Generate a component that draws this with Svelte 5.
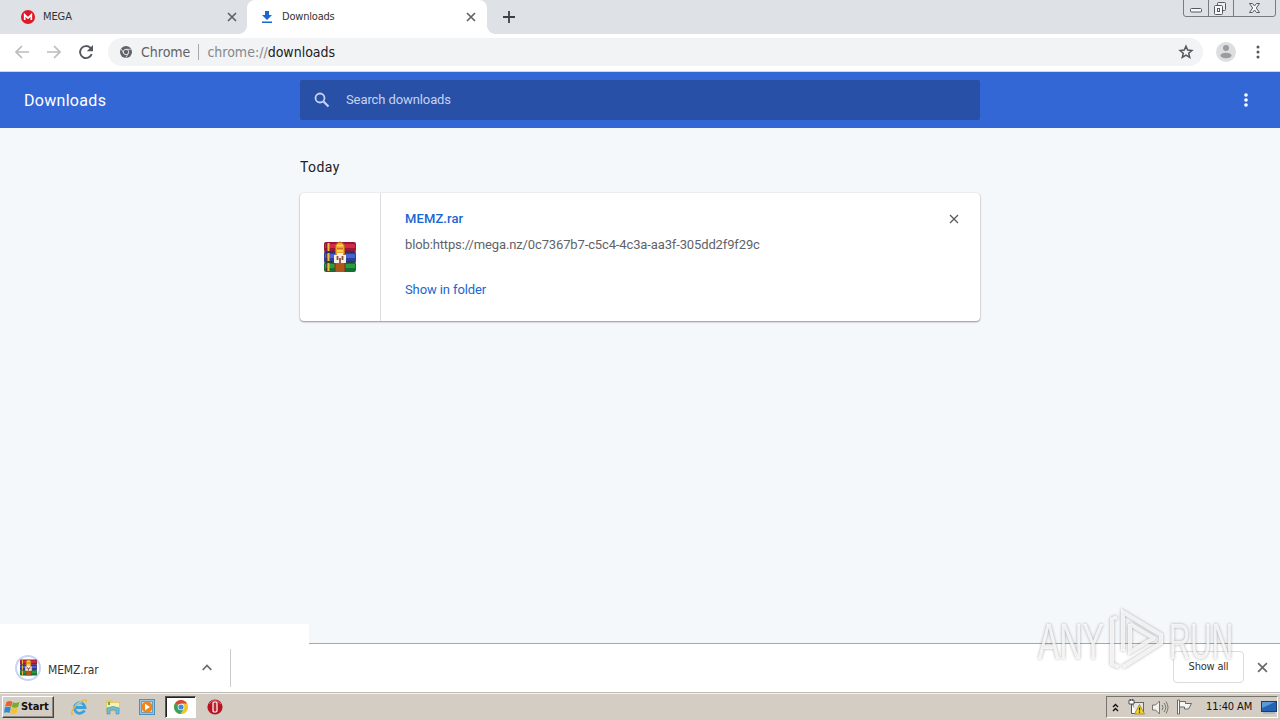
<script>
  const source = 'blob:https://mega.nz/0c7367b7-c5c4-4c3a-aa3f-305dd2f9f29c';
</script>

{#snippet archive(size)}
  <svg class="archive" width={size} height={size} viewBox="0 0 32 32">
    <rect x="0" y="1" width="32" height="10" rx="2" fill="#9c1736" />
    <rect x="1" y="3" width="30" height="4" fill="#d02c49" />
    <rect x="0" y="11" width="32" height="10" rx="1.5" fill="#293f9c" />
    <rect x="1" y="13" width="30" height="4" fill="#4d60cf" />
    <rect x="0" y="21" width="32" height="10" rx="2" fill="#107230" />
    <rect x="1" y="23" width="30" height="4" fill="#2c9a42" />
    <path d="M0 11h32M0 21h32" stroke="#30263c" />
    <path d="M4.5 2v8M4.5 12v8M4.5 22v8" stroke="#f2bd35" stroke-width="2" />
    <path d="M2.5 2v8M2.5 12v8M2.5 22v8" stroke="#60242d" stroke-width=".7" />
    <path d="M11 21h10v10H11z" fill="#b0561f" />
    <path d="M11 22v9M21 22v9" stroke="#71371b" />
    <path d="M11.500 6q0-4 4.500-5 4.500 1 4.500 5v8h-9z" fill="#f0a522" stroke="#bd6b1b" />
    <path d="M13 4.500h6M13 10h6" stroke="#ffdf6d" stroke-width="1.500" />
    <path d="M13 7.500h6" stroke="#c87616" />
    <path d="M10 14h3v-2h6v2h3v8H10z" fill="#f8eee5" />
    <path d="M13.500 15v4M18.500 15v4M16 17v5" stroke="#8b5139" stroke-width="1.800" />
  </svg>
{/snippet}

{#snippet close(size, color, weight)}
  <svg width={size} height={size} viewBox="0 0 10 10"><path d="M1 1l8 8M9 1L1 9" stroke={color} stroke-width={weight} /></svg>
{/snippet}

<div class="screen">
  <div class="tabs">
    <div class="tab mega">
      <svg width="14" height="14" viewBox="0 0 14 14"><circle cx="7" cy="7" r="7" fill="#de1824" /><path d="M3.7 10V4.8L7 8l3.3-3.2V10" fill="none" stroke="#fff" stroke-width="1.7" /></svg>
      <span>MEGA</span>
      {@render close(10, '#5f6368', 1.7)}
    </div>
    <div class="tab active">
      <svg width="12" height="14" viewBox="0 0 12 14"><path d="M4 1h4v4h3L6 10 1 5h3zM1 11.5h10V13H1z" fill="#1967d2" /></svg>
      <span>Downloads</span>
      {@render close(10, '#5f6368', 1.7)}
    </div>
    <svg class="plus" width="12" height="12" viewBox="0 0 12 12"><path d="M6 0v12M0 6h12" stroke="#3c4043" stroke-width="1.8" /></svg>
    <div class="window-controls">
      <svg width="93" height="17" viewBox="0 0 93 17" fill="none" stroke="#777b82">
        <path d="M.5 0v14q0 2.500 2.500 2.500h87q2.500 0 2.500-2.500V0M25.500 0v16M50.500 0v16" />
        <rect x="7.500" y="8.500" width="11" height="3.500" rx="1" fill="#f8f8fa" stroke="#555961" />
        <rect x="34.500" y="2.500" width="8" height="8" rx="1" fill="#eee" stroke="#555961" />
        <rect x="31.500" y="5.500" width="8" height="9" rx="1" fill="#f8f8fa" stroke="#555961" />
        <rect x="34.500" y="8.500" width="2" height="3" stroke="#555961" />
        <path d="M66.500 3.500h3l2 2.500 2-2.500h3l-3.200 4.500 3.200 4.500h-3l-2-2.500-2 2.500h-3L69.700 8z" fill="#f8f8fa" stroke="#555961" />
      </svg>
    </div>
  </div>

  <div class="toolbar">
    <svg class="back" width="14" height="14" viewBox="0 0 14 14"><path d="M14 7H1.500M7 1L1 7l6 6" fill="none" stroke="#babcbe" stroke-width="1.700" /></svg>
    <svg class="forward" width="14" height="14" viewBox="0 0 14 14"><path d="M0 7h12.500M7 1l6 6-6 6" fill="none" stroke="#babcbe" stroke-width="1.700" /></svg>
    <svg class="reload" width="16" height="16" viewBox="0 0 16 16"><path d="M13.700 10.200A6 6 0 1 1 12.300 3.800l2 2" fill="none" stroke="#55585b" stroke-width="1.900" /><path d="M15 1v6.300H8.800z" fill="#55585b" /></svg>
    <div class="address">
      <svg width="12" height="12" viewBox="0 0 12 12"><circle cx="6" cy="6" r="6" fill="#5f6368" /><circle cx="6" cy="6" r="2.700" fill="#5f6368" stroke="#e8eaed" stroke-width=".9" /><path d="M6 3.300h5.200M3.700 7.400L1.200 3M8.300 7.400L5.800 11.800" stroke="#e8eaed" stroke-width=".8" /></svg>
      <span class="chrome-label">Chrome</span><i></i><span class="url">chrome://<b>downloads</b></span>
      <svg class="star" width="16" height="16" viewBox="0 0 16 16"><path d="M8 2.200l1.700 3.900 4.200.400-3.200 2.800 1 4.100L8 11.200l-3.700 2.200 1-4.100-3.200-2.800 4.200-.400z" fill="none" stroke="#55585b" stroke-width="1.500" /></svg>
    </div>
    <svg class="profile" width="20" height="20" viewBox="0 0 20 20"><circle cx="10" cy="10" r="10" fill="#dddedf" /><circle cx="10" cy="6" r="3" fill="#9b9c9d" /><ellipse cx="10" cy="13.500" rx="5.500" ry="2.800" fill="#9b9c9d" /></svg>
    <svg class="menu" width="4" height="14" viewBox="0 0 4 14" fill="#55585b"><circle cx="2" cy="2" r="1.500" /><circle cx="2" cy="7" r="1.500" /><circle cx="2" cy="12" r="1.500" /></svg>
  </div>

  <header>
    <h1>Downloads</h1>
    <div class="search">
      <svg width="16" height="16" viewBox="0 0 16 16"><circle cx="6" cy="6" r="4.500" fill="none" stroke="#c5d3f1" stroke-width="1.800" /><path d="M9.500 9.500l5 5" stroke="#c5d3f1" stroke-width="2.200" /></svg>
      <span>Search downloads</span>
    </div>
    <svg width="4" height="14" viewBox="0 0 4 14" fill="#fff"><circle cx="2" cy="2" r="1.800" /><circle cx="2" cy="7" r="1.800" /><circle cx="2" cy="12" r="1.800" /></svg>
  </header>

  <main>
    <h2>Today</h2>
    <article>
      <div class="file-icon">{@render archive(32)}</div>
      <div class="details">
        <div class="filename">MEMZ.rar</div>
        <div class="source">{source}</div>
        <div class="folder">Show in folder</div>
      </div>
      <div class="remove">{@render close(10, '#55585b', 1.200)}</div>
    </article>
    <div class="shelf-lift"></div>
  </main>

  <footer>
    <div class="download">
      <div class="ring">{@render archive(17)}</div>
      <span>MEMZ.rar</span>
      <svg width="10" height="7" viewBox="0 0 10 7"><path d="M.700 6L5 1.500 9.300 6" fill="none" stroke="#66696d" stroke-width="1.700" /></svg>
    </div>
    <div class="show-all">Show all</div>
    {@render close(11, '#66696d', 1.500)}
  </footer>

  <div class="taskbar">
    <div class="start">
      <svg width="16" height="15" viewBox="0 0 16 15"><path d="M2.500 2Q6 .1 8.500 2L7.200 7Q4.500 5 1 6.800z" fill="#e76430" /><path d="M9 2.300q3 1.300 6.500-.2L14 7q-3 1.500-6.200.1z" fill="#72ad35" /><path d="M.8 7.500Q4 5.800 6.900 7.600L5.500 13Q3 11.500 0 12.800z" fill="#3488cd" /><path d="M7.500 7.800q2.800 1.400 6.300 0l-1.300 5.400q-3 1.500-6.300 0z" fill="#f4c32f" /></svg>
      <span>Start</span>
    </div>
    <svg class="ie" width="17" height="17" viewBox="0 0 17 17"><path d="M13.500 11.300A5.300 5.300 0 1 1 14 8.500H5" fill="none" stroke="#3aa1d9" stroke-width="2.800" /><path d="M2.500 14.500Q-.5 17 1 12.500 4 5 12 1.500q5-2 3 2" fill="none" stroke="#e5b945" stroke-width="1.400" /><path d="M4.500 6Q7 2.500 11 4" fill="none" stroke="#9fdbf3" /></svg>
    <svg class="explorer" width="16" height="16" viewBox="0 0 16 16"><path d="M1 1h6l1 2h7v10H1z" fill="#e5c96b" /><path d="M2 4h12v7H2z" fill="#faf0ae" /><path d="M3 3h2v3H3z" fill="#57ad61" /><path d="M2 9q6-3 12 0v6h-3v-4H5v4H2z" fill="#71bbdb" stroke="#4699bd" stroke-width=".7" /></svg>
    <svg class="media" width="16" height="16" viewBox="0 0 16 16"><rect x=".5" y=".5" width="15" height="15" fill="#9cc4df" stroke="#528eba" /><rect x="2.500" y="2.500" width="11" height="11" fill="#c3dced" stroke="#66a1c8" /><circle cx="8" cy="8" r="5.500" fill="#f08519" /><path d="M6 4.800L11 8l-5 3.200z" fill="#fff" /></svg>
    <div class="chrome-task">
      <svg width="14" height="14" viewBox="0 0 14 14"><circle cx="7" cy="7" r="7" fill="#f2c42c" /><path d="M7 7L.94 3.500A7 7 0 0 1 13.060 3.500z" fill="#d94737" /><path d="M.94 3.500A7 7 0 0 0 6.500 14L10 8.500 7 7z" fill="#37a25b" /><path d="M7 3.600h5.900A7 7 0 0 1 7 14l3-5z" fill="#f2c42c" /><circle cx="7" cy="7" r="3.300" fill="#fff" /><circle cx="7" cy="7" r="2.600" fill="#4386e5" /></svg>
    </div>
    <svg class="opera" width="16" height="16" viewBox="0 0 16 16"><circle cx="8" cy="8" r="7.600" fill="#b71522" /><path d="M2 5Q7-2 14 5" fill="none" stroke="#df6770" /><rect x="6" y="3" width="4" height="10" rx="1.200" fill="#b72a32" stroke="#fff" stroke-width="1.200" /></svg>
    <div class="tray">
      <svg class="chevrons" width="7" height="9" viewBox="0 0 7 9"><path d="M1 4l2.500-2.500L6 4M1 8l2.500-2.500L6 8" fill="none" stroke="#111" stroke-width="1.400" /></svg>
      <svg class="network" width="17" height="16" viewBox="0 0 17 16"><rect x="5" y="3.500" width="10.500" height="9" fill="#e8e6e3" stroke="#666" /><path d="M1 1h5v4H1zM3.500 5v9.500H9" fill="#fff" stroke="#555" /><path d="M2.500 0v2M4.500 0v2" stroke="#555" /><path d="M11.500 5.500L16.500 15h-10z" fill="#f5d328" stroke="#9a831c" stroke-width=".8" /><path d="M11.500 8.500v3M11.500 12.500v1.300" stroke="#222" stroke-width="1.200" /></svg>
      <svg class="volume" width="17" height="15" viewBox="0 0 17 15"><path d="M.5 5h3l4-4v13l-4-4h-3z" fill="#f3f2ef" stroke="#77736e" /><path d="M10 5q2 2.500 0 5M12 3q3.500 4.500 0 9M14 1.500q4 6 0 12" fill="none" stroke="#77736e" /></svg>
      <svg class="flag" width="17" height="16" viewBox="0 0 17 16"><path d="M1.500 1h2v14h-2z" fill="#fff" stroke="#6a6865" /><path d="M3.500 2.500h6v2h6l-3 5.500H8.500V8h-5z" fill="#f5f5f2" stroke="#6a6865" /></svg>
      <span>11:40 AM</span>
      <svg class="desktop" width="16" height="13" viewBox="0 0 16 13"><rect x=".5" y=".5" width="15" height="10" fill="#2564b3" stroke="#173d75" /><path d="M1 1h13L1 7z" fill="#5a9ada" /><path d="M2 12h12" stroke="#aeb6bf" stroke-width="2" /></svg>
    </div>
  </div>

  <div class="watermark">
    <svg width="210" height="70" viewBox="0 0 210 70">
      <g fill="none" stroke="#fff" stroke-opacity=".8" stroke-width="4">
        <path d="M84 12l-5 2v45l7 3M90 46V7l38 23v8L90 62M97 19v28l24-14M97 19l25 15" />
      </g>
      <g fill="#fff" fill-opacity=".8"><text x="5" y="54" textLength="66" lengthAdjust="spacingAndGlyphs">ANY</text><text x="136" y="54" textLength="64" lengthAdjust="spacingAndGlyphs">RUN</text></g>
    </svg>
  </div>
</div>

<style>
  :global(body) { margin: 0; overflow: hidden; }
  * { box-sizing: border-box; }
  svg { display: block; flex: none; }
  span { white-space: nowrap; }
  .screen { width: 1280px; height: 720px; position: relative; display: flex; flex-direction: column; background: #fff; font: 11px/14px "DejaVu Sans Condensed", "DejaVu Sans", sans-serif; color: #333; overflow: hidden; }
  .tabs { height: 34px; background: #dee1e6; display: flex; align-items: flex-start; }
  .tab { height: 34px; display: flex; align-items: center; }
  .mega { width: 247px; padding: 0 10px 0 21px; background: radial-gradient(circle at 0 0, #dee1e6 7.500px, #fff 8px) 100% 100% / 8px 8px no-repeat; }
  .tab span { margin-left: 8px; margin-right: auto; letter-spacing: -.1px; }
  .active { width: 240px; padding: 0 11px 0 14px; background: #fff; border-radius: 8px 8px 0 0; position: relative; }
  .active span { margin-left: 9px; letter-spacing: -.2px; }
  .active::after { content: ''; position: absolute; left: 100%; bottom: 0; width: 8px; height: 8px; background: radial-gradient(circle at 100% 0, #dee1e6 7.500px, #fff 8px); }
  .plus { margin: 11px 0 0 16px; }
  .window-controls { margin-left: auto; margin-right: 4px; }
  .toolbar { height: 38px; border-bottom: 1px solid #cbd7eb; display: flex; align-items: center; padding: 0 20px 1px 15px; }
  .forward { margin-left: 18px; }
  .reload { margin-left: 17px; }
  .address { width: 1095px; height: 28px; margin-left: 14px; border-radius: 14px; background: #f1f3f4; display: flex; align-items: center; padding: 0 9px 0 12px; font-size: 14px; color: #5f6368; }
  .chrome-label { margin-left: 9px; }
  .address i { width: 1px; height: 16px; background: #a6a9ac; margin: 0 8px; }
  .url { color: #85888c; }
  .url b { font-weight: 400; color: #202124; }
  .star { margin-left: auto; }
  .profile { margin-left: 13px; }
  .menu { margin-left: 20px; }
  header { height: 56px; background: #3367d6; display: grid; grid-template-columns: 276px 680px 1fr; padding: 0 32px 0 24px; align-items: center; font-family: Roboto, sans-serif; color: #fff; }
  header > svg { justify-self: end; }
  h1 { margin: 2px 0 0; font-size: 16px; font-weight: 400; letter-spacing: .3px; line-height: 20px; }
  .search { height: 40px; background: #2950a7; display: flex; align-items: center; padding-left: 14px; font-size: 13px; color: #c5d3f1; border-radius: 2px; }
  .search span { margin-left: 16px; letter-spacing: -.1px; }
  main { height: 515px; background: #f5f8fb; display: flex; flex-direction: column; font-family: Roboto, sans-serif; }
  h2 { margin: 29px 0 0 300px; font-size: 14px; line-height: 20px; font-weight: 400; letter-spacing: .4px; color: #202124; }
  article { width: 680px; height: 128px; margin: 16px auto 0; border-radius: 4px; background: #fff; display: flex; box-shadow: 0 1px 2px #0006, 0 0 1px #0003; }
  .file-icon { width: 81px; border-right: 1px solid #dadce0; display: grid; place-items: center; }
  .details { flex: 1; padding: 18px 24px; font-size: 13px; line-height: 16px; color: #5f6368; }
  .filename { color: #1967d2; font-weight: 500; letter-spacing: .1px; }
  .source { margin-top: 10px; letter-spacing: -.13px; }
  .folder { margin-top: 29px; color: #1967d2; letter-spacing: -.1px; }
  .remove { padding: 21px 21px 0 0; }
  .shelf-lift { width: 309px; height: 19px; margin-top: auto; background: #fff; flex: none; }
  footer { height: 49px; display: flex; align-items: center; padding-right: 12px; background: linear-gradient(#a5a7aa, #a5a7aa) 309px 0 / 971px 1px no-repeat; }
  .download { width: 231px; height: 38px; border-right: 1px solid #ccc; display: flex; align-items: center; padding: 0 18px 0 15px; font-size: 12px; }
  .ring { width: 26px; height: 26px; border: 2px solid #c7d2f4; border-radius: 50%; display: grid; place-items: center; }
  .download span { margin: 4px auto 0 7px; letter-spacing: -.15px; }
  .show-all { width: 71px; height: 32px; border: 1px solid #dadce0; border-radius: 4px; margin: 0 13px 2px auto; display: grid; place-items: center; letter-spacing: -.2px; }
  .taskbar { height: 28px; background: #d4cdc4; border-top: 1px solid #bdb9b3; box-shadow: inset 0 1px #f6f4f0; display: flex; align-items: center; padding: 1px 2px 0; color: #111; }
  .start { width: 52px; height: 22px; border: 1px solid; border-color: #fff #444 #444 #fff; box-shadow: inset -1px -1px #8b8781; display: flex; align-items: center; padding-left: 1px; font-weight: 700; letter-spacing: -.1px; }
  .start span { margin-left: 1px; }
  .ie { margin-left: 17px; }
  .explorer { margin-left: 17px; }
  .media { margin-left: 18px; }
  .chrome-task { width: 31px; height: 22px; margin-left: 10px; border: 1px solid; border-color: #555 #fff #fff #555; box-shadow: inset 1px 1px #222; background: #fff; display: grid; place-items: center; }
  .opera { margin-left: 11px; }
  .tray { width: 172px; height: 22px; margin-left: auto; border: 1px solid; border-color: #77736e #fff #fff #77736e; display: flex; align-items: center; padding-left: 5px; }
  .network { margin-left: 9px; }
  .volume { margin-left: 7px; }
  .flag { margin-left: 7px; }
  .tray span { margin-left: 13px; letter-spacing: -.1px; }
  .desktop { margin-left: auto; }
  .watermark { position: absolute; left: 1033px; top: 605px; filter: drop-shadow(0 0 1.500px #0006); }
  .watermark text { font: 400 50px "Liberation Sans Narrow", "Liberation Sans", sans-serif; }
</style>
